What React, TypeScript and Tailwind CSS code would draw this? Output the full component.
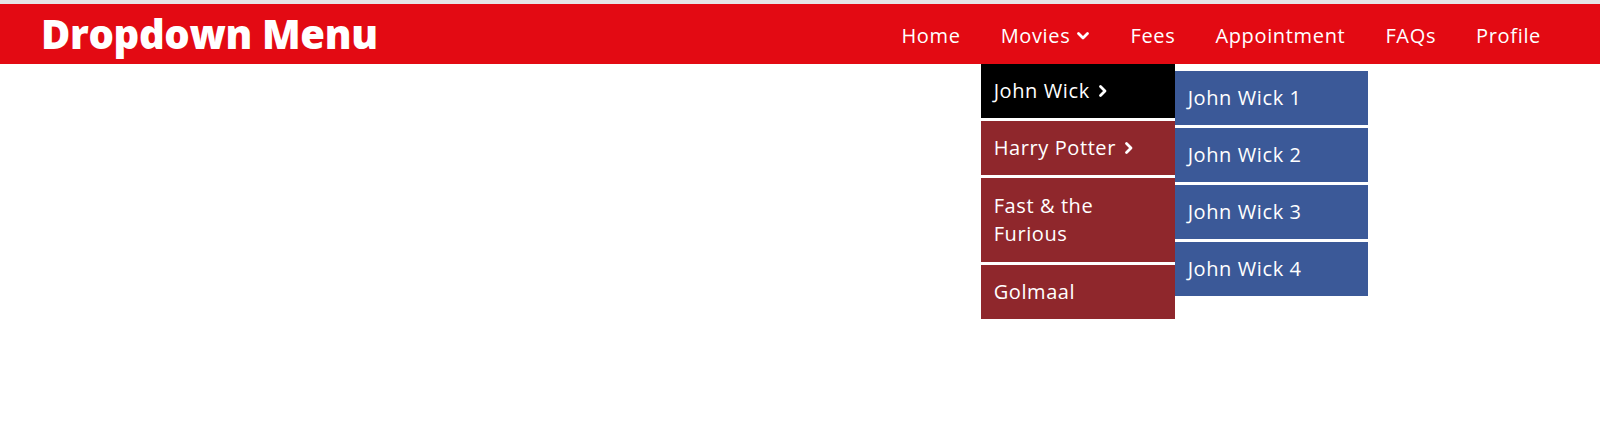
import React from "react";

const Chevron = ({ dir }: { dir: "down" | "right" }) => (
  <svg
    width="14"
    height="14"
    viewBox="0 0 14 14"
    className="inline-block"
    fill="none"
    stroke="currentColor"
    strokeWidth="2.8"
    strokeLinecap="round"
    strokeLinejoin="round"
  >
    {dir === "down" ? (
      <polyline points="2.5,4.5 7,9 11.5,4.5" />
    ) : (
      <polyline points="4.5,2.5 9,7 4.5,11.5" />
    )}
  </svg>
);

export default function App() {
  const font = { fontFamily: '"Open Sans", "Noto Sans", sans-serif' };
  return (
    <div className="w-[1600px] h-[437px] bg-white border-t-4 border-[#e6e6e6]" style={font}>
      <header className="h-[60px] bg-[#e30a13] flex items-center justify-between pl-[41px] pr-[39px]">
        <h1 className="text-white text-[40px] font-extrabold tracking-[-0.35px] leading-none">Dropdown Menu</h1>
        <ul className="flex items-center h-full text-white text-[20px] tracking-[0.66px]">
          <li className="px-[20px] pt-[3px]">Home</li>
          <li className="relative px-[20px] h-full flex items-center">
            <span className="flex items-center gap-[6px] pt-[3px]">
              Movies <Chevron dir="down" />
            </span>
            <ul className="absolute left-0 top-full w-[194px] text-[20px] tracking-[0.6px] leading-[28px]">
              <li className="relative bg-black px-[13px] py-[13px] border-b-[3px] border-white">
                <span className="flex items-center gap-[6px]">
                  John Wick <Chevron dir="right" />
                </span>
                <ul className="absolute left-full top-[7px] w-[193px]">
                  {["John Wick 1", "John Wick 2", "John Wick 3", "John Wick 4"].map((t, i) => (
                    <li
                      key={t}
                      className={`bg-[#3b5998] px-[13px] py-[13px] ${i < 3 ? "border-b-[3px] border-white" : ""}`}
                    >
                      {t}
                    </li>
                  ))}
                </ul>
              </li>
              <li className="bg-[#8f272c] px-[13px] py-[13px] border-b-[3px] border-white">
                <span className="flex items-center gap-[6px]">
                  Harry Potter <Chevron dir="right" />
                </span>
              </li>
              <li className="bg-[#8f272c] px-[13px] py-[14px] pr-[40px] border-b-[3px] border-white">
                Fast &amp; the Furious
              </li>
              <li className="bg-[#8f272c] px-[13px] py-[13px]">Golmaal</li>
            </ul>
          </li>
          <li className="px-[20px] pt-[3px]">Fees</li>
          <li className="px-[20px] pt-[3px]">Appointment</li>
          <li className="px-[20px] pt-[3px]">FAQs</li>
          <li className="px-[20px] pt-[3px]">Profile</li>
        </ul>
      </header>
    </div>
  );
}
